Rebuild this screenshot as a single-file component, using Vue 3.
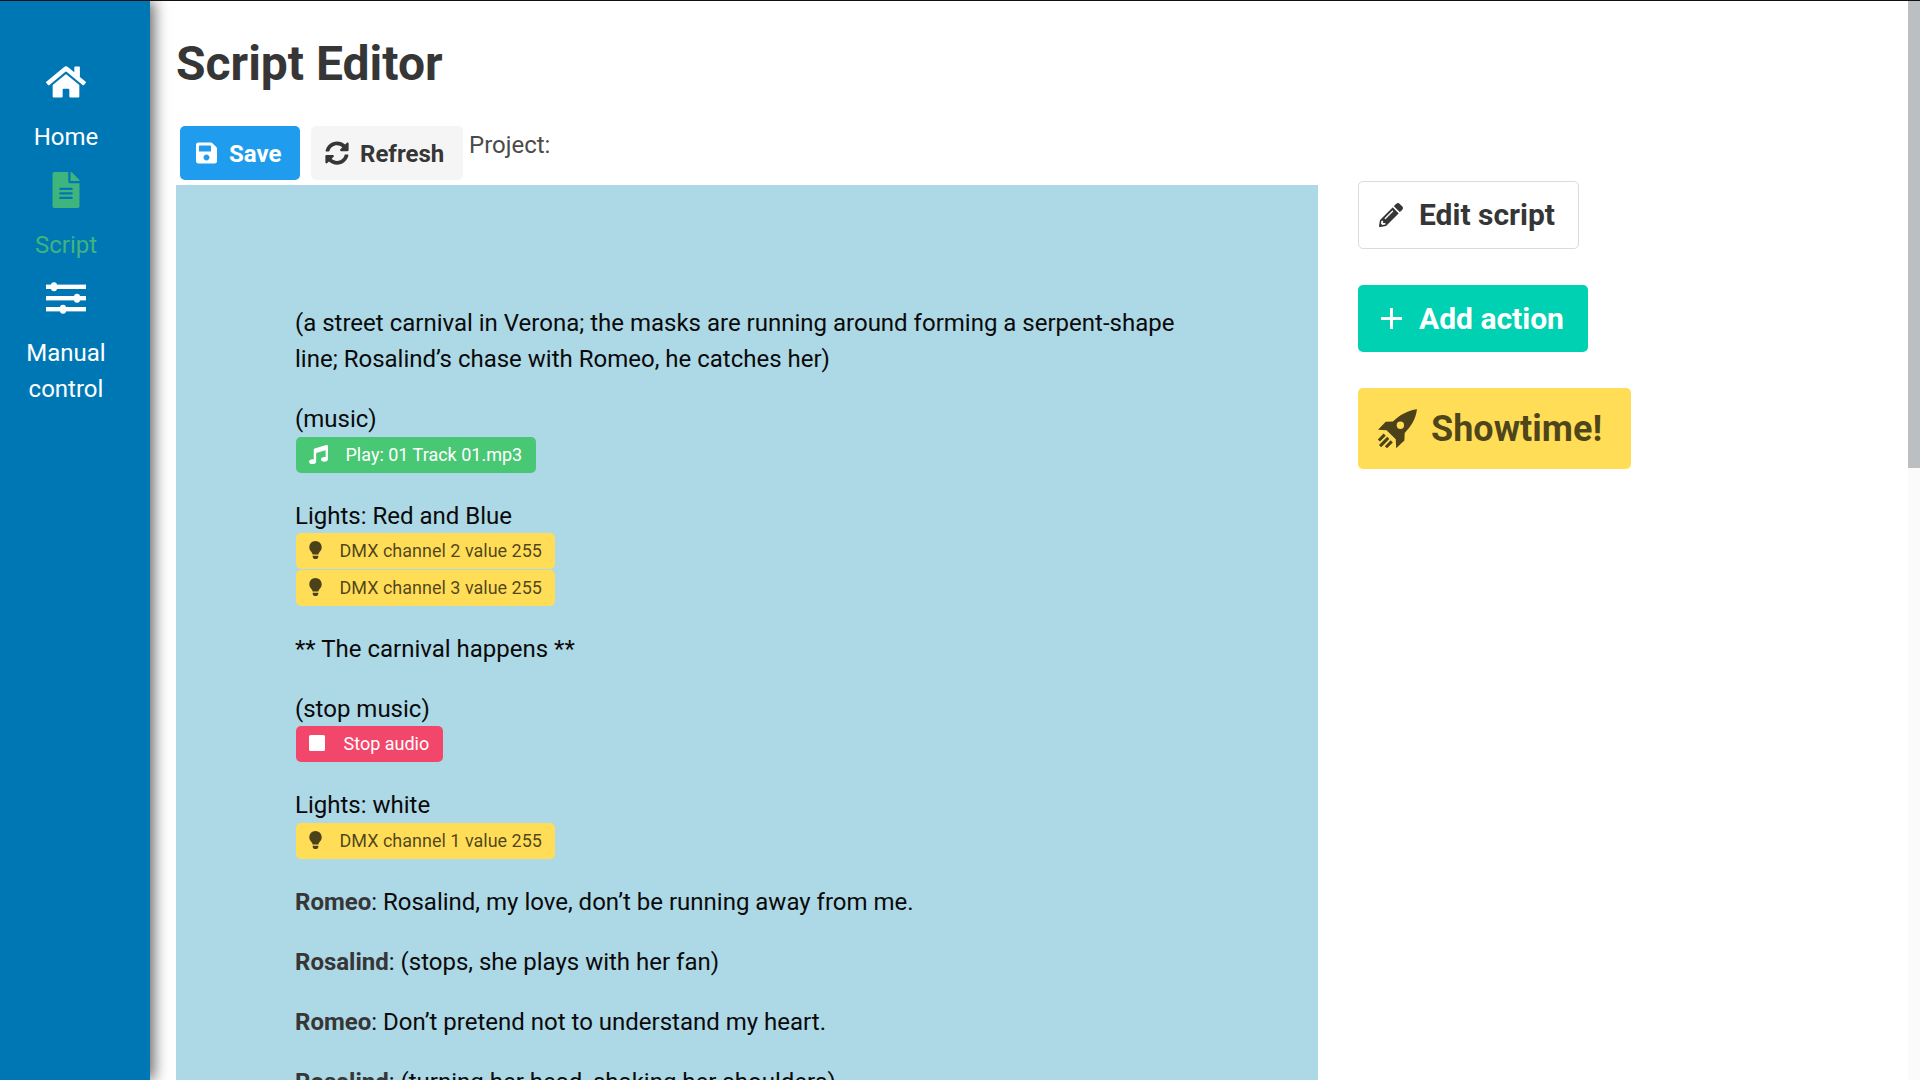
<script setup>
const paragraphs = [
  ['Romeo', ': Rosalind, my love, don’t be running away from me.'],
  ['Rosalind', ': (stops, she plays with her fan)'],
  ['Romeo', ': Don’t pretend not to understand my heart.'],
  ['Rosalind', ': (turning her head, shaking her shoulders)'],
]
const bulb = 'M96.06 454.35c.01 6.29 1.87 12.45 5.36 17.69l17.09 25.69a31.99 31.99 0 0 0 26.64 14.28h61.71a31.99 31.99 0 0 0 26.64-14.28l17.09-25.69a31.989 31.989 0 0 0 5.36-17.69l.04-38.35H96.01l.05 38.35zM0 176c0 44.37 16.45 84.85 43.56 115.78 16.52 18.85 42.36 58.23 52.21 91.45.04.26.07.52.11.78h160.24c.04-.26.07-.51.11-.78 9.85-33.22 35.69-72.6 52.21-91.45C335.55 260.85 352 220.37 352 176 352 78.61 272.91-.3 175.45 0 73.44.31 0 82.97 0 176z'
</script>

<template>
  <div class="app">
    <nav class="sidebar">
      <a class="nav-item">
        <svg class="nav-icon" viewBox="0 0 576 512"><path fill="currentColor" d="M280.37 148.26L96 300.11V464a16 16 0 0 0 16 16l112.06-.29a16 16 0 0 0 15.92-16V368a16 16 0 0 1 16-16h64a16 16 0 0 1 16 16v95.64a16 16 0 0 0 16 16.05L464 480a16 16 0 0 0 16-16V300L295.67 148.26a12.19 12.19 0 0 0-15.3 0zM571.6 251.47L488 182.56V44.05a12 12 0 0 0-12-12h-56a12 12 0 0 0-12 12v72.61L318.47 43a48 48 0 0 0-61 0L4.34 251.47a12 12 0 0 0-1.6 16.9l25.5 31A12 12 0 0 0 45.15 301l235.22-193.74a12.19 12.19 0 0 1 15.3 0L530.9 301a12 12 0 0 0 16.9-1.6l25.5-31a12 12 0 0 0-1.7-16.93z"/></svg>
        <span>Home</span>
      </a>
      <a class="nav-item active">
        <svg class="nav-icon" viewBox="0 0 384 512"><path fill="currentColor" d="M224 136V0H24C10.7 0 0 10.7 0 24v464c0 13.3 10.7 24 24 24h336c13.3 0 24-10.7 24-24V160H248c-13.2 0-24-10.8-24-24zm64 236c0 6.6-5.4 12-12 12H108c-6.6 0-12-5.4-12-12v-8c0-6.6 5.4-12 12-12h168c6.6 0 12 5.4 12 12v8zm0-64c0 6.6-5.4 12-12 12H108c-6.6 0-12-5.4-12-12v-8c0-6.6 5.4-12 12-12h168c6.6 0 12 5.4 12 12v8zm0-72v8c0 6.6-5.4 12-12 12H108c-6.6 0-12-5.4-12-12v-8c0-6.6 5.4-12 12-12h168c6.6 0 12 5.4 12 12zm96-114.1v6.1H256V0h6.1c6.4 0 12.5 2.5 17 7l97.9 98c4.5 4.5 7 10.6 7 16.9z"/></svg>
        <span>Script</span>
      </a>
      <a class="nav-item">
        <svg class="nav-icon" viewBox="0 0 40 36"><g fill="currentColor"><rect x="0" y="4.6" width="40" height="4.4"/><rect x="5" y="2.2" width="6" height="9" rx="3"/><rect x="0" y="16" width="40" height="4.4"/><rect x="28" y="13.7" width="6" height="9" rx="3"/><rect x="0" y="27" width="40" height="4.4"/><rect x="14" y="24.7" width="6" height="9" rx="3"/></g></svg>
        <span>Manual<br>control</span>
      </a>
    </nav>

    <main class="main">
      <h1 class="title">Script Editor</h1>
      <div class="columns">
        <div class="editor-col">
          <div class="toolbar">
            <button class="btn btn-save">
              <svg class="btn-icon" viewBox="0 0 448 512"><path fill="currentColor" d="M433.941 129.941l-83.882-83.882A48 48 0 0 0 316.118 32H48C21.49 32 0 53.49 0 80v352c0 26.51 21.49 48 48 48h352c26.51 0 48-21.49 48-48V163.882a48 48 0 0 0-14.059-33.941zM224 416c-35.346 0-64-28.654-64-64 0-35.346 28.654-64 64-64s64 28.654 64 64c0 35.346-28.654 64-64 64zm96-304.52V212c0 6.627-5.373 12-12 12H76c-6.627 0-12-5.373-12-12V108c0-6.627 5.373-12 12-12h228.52c3.183 0 6.235 1.264 8.485 3.515l3.48 3.48A11.996 11.996 0 0 1 320 111.48z"/></svg>
              <span>Save</span>
            </button>
            <button class="btn btn-refresh">
              <svg class="btn-icon" viewBox="0 0 512 512"><path fill="currentColor" d="M370.72 133.28C339.458 104.008 298.888 87.962 255.848 88c-77.458.068-144.328 53.178-162.791 126.85-1.344 5.363-6.122 9.15-11.651 9.15H24.103c-7.498 0-13.194-6.807-11.807-14.176C33.933 94.924 134.813 8 256 8c66.448 0 126.791 26.136 171.315 68.685L463.03 40.97C478.149 25.851 504 36.559 504 57.941V192c0 13.255-10.745 24-24 24H345.941c-21.382 0-32.09-25.851-16.971-40.971l41.75-41.749zM32 296h134.059c21.382 0 32.09 25.851 16.971 40.971l-41.75 41.75c31.262 29.273 71.835 45.319 114.876 45.28 77.418-.07 144.315-53.144 162.787-126.849 1.344-5.363 6.122-9.15 11.651-9.15h57.304c7.498 0 13.194 6.807 11.807 14.176C478.067 417.076 377.187 504 256 504c-66.448 0-126.791-26.136-171.315-68.685L48.97 471.03C33.851 486.149 8 475.441 8 454.059V320c0-13.255 10.745-24 24-24z"/></svg>
              <span class="lift">Refresh</span>
            </button>
            <span class="project">Project:</span>
          </div>
          <section class="script">
            <p>(a street carnival in Verona; the masks are running around forming a serpent-shape line; Rosalind’s chase with Romeo, he catches her)</p>
            <div class="block">
              <p>(music)</p>
              <div class="tag tag-green">
                <svg class="tag-icon music" viewBox="0 0 512 512"><path fill="currentColor" d="M511.99 32.01c0-21.71-21.1-37.01-41.6-30.51L150.4 96c-13.3 4.2-22.4 16.5-22.4 30.5v261.42c-10.05-2.38-20.72-3.92-32-3.92-53.02 0-96 28.65-96 64s42.98 64 96 64 96-28.65 96-64V214.31l256-75.02v184.63c-10.05-2.38-20.72-3.92-32-3.92-53.02 0-96 28.65-96 64s42.98 64 96 64 96-28.65 96-64l-.01-351.99z"/></svg>
                <span>Play: 01 Track 01.mp3</span>
              </div>
            </div>
            <div class="block">
              <p class="low">Lights: Red and Blue</p>
              <div class="tag tag-yellow">
                <svg class="tag-icon bulb" viewBox="0 0 352 512"><path fill="currentColor" :d="bulb"/></svg>
                <span>DMX channel 2 value 255</span>
              </div>
              <div class="tag tag-yellow">
                <svg class="tag-icon bulb" viewBox="0 0 352 512"><path fill="currentColor" :d="bulb"/></svg>
                <span>DMX channel 3 value 255</span>
              </div>
            </div>
            <p class="carnival">** The carnival happens **</p>
            <div class="block">
              <p class="low">(stop music)</p>
              <div class="tag tag-red">
                <svg class="tag-icon stop" viewBox="0 0 16 16"><rect width="16" height="16" rx="1.6" fill="currentColor"/></svg>
                <span>Stop audio</span>
              </div>
            </div>
            <div class="block last">
              <p class="gap-line">Lights: white</p>
              <div class="tag tag-yellow">
                <svg class="tag-icon bulb" viewBox="0 0 352 512"><path fill="currentColor" :d="bulb"/></svg>
                <span>DMX channel 1 value 255</span>
              </div>
            </div>
            <p v-for="(p, i) in paragraphs" :key="i"><strong>{{ p[0] }}</strong>{{ p[1] }}</p>
          </section>
        </div>
        <aside class="actions">
          <button class="btn btn-md btn-edit">
            <svg class="act-icon" viewBox="0 0 512 512"><path fill="currentColor" d="M497.9 142.1l-46.1 46.1c-4.7 4.7-12.3 4.7-17 0l-111-111c-4.7-4.7-4.7-12.3 0-17l46.1-46.1c18.7-18.7 49.1-18.7 67.9 0l60.1 60.1c18.8 18.7 18.8 49.1 0 67.9zM284.2 99.8L21.6 362.4.4 483.9c-2.9 16.4 11.4 30.6 27.8 27.8l121.5-21.3 262.6-262.6c4.7-4.7 4.7-12.3 0-17l-111-111c-4.8-4.7-12.4-4.7-17.1 0zM124.1 339.9c-5.5-5.5-5.5-14.3 0-19.8l154-154c5.5-5.5 14.3-5.5 19.8 0s5.5 14.3 0 19.8l-154 154c-5.5 5.5-14.3 5.5-19.8 0zM88 424h48v36.3l-64.5 11.3-31.1-31.1L51.7 376H88v48z"/></svg>
            <span>Edit script</span>
          </button>
          <button class="btn btn-md btn-add">
            <svg class="act-icon" viewBox="0 0 21 21"><path fill="currentColor" d="M9 0h3v9h9v3h-9v9H9v-9H0V9h9z"/></svg>
            <span>Add action</span>
          </button>
          <button class="btn btn-lg btn-show">
            <svg class="rocket" viewBox="0 0 39 39"><path fill="currentColor" d="M39 .3C30 1.5 22 6 15.5 12.2L8.5 12.5 1 20.2l8.3.4 9 9 .4 8.6 8-7.6.3-7.3C33.5 17 37.8 9.5 39 .3zM22.8 12.2a3.6 3.6 0 1 1 0 7.2 3.6 3.6 0 0 1 0-7.2z"/><path fill="none" stroke="currentColor" stroke-width="3" d="M7.5 25 1.8 30.7M11 28.2 3 36.2M14.4 31.6 8.7 37.3"/></svg>
            <span>Showtime!</span>
          </button>
        </aside>
      </div>
    </main>
    <div class="scrollbar"><div class="thumb"></div></div>
  </div>
</template>

<style>
html, body { margin: 0; height: 100%; overflow: hidden; background: #fff; }
</style>

<style scoped>
.app {
  display: flex;
  height: 1080px;
  overflow: hidden;
  font-family: Roboto, "Liberation Sans", sans-serif;
  font-size: 24px;
  line-height: 1.5;
  color: #4a4a4a;
  border-top: 1px solid #111;
  box-sizing: border-box;
  position: relative;
}
.sidebar {
  flex: 0 0 150px;
  background: #0077b5;
  box-shadow: 4px 0 14px rgba(0, 0, 0, 0.6);
  padding: 63px 18px 0 0;
  box-sizing: border-box;
  color: #fff;
  display: flex;
  flex-direction: column;
  gap: 17px;
  z-index: 1;
}
.nav-item {
  display: flex;
  flex-direction: column;
  align-items: center;
  text-align: center;
  color: #fff;
}
.nav-item.active { color: #3fb47c; }
.nav-icon { height: 36px; width: 40px; margin-bottom: 19px; display: block; }
.main {
  flex: 1;
  min-width: 0;
  padding: 0 26px;
  box-sizing: border-box;
}
.title {
  margin: 36px 0 0;
  font-size: 48px;
  line-height: 54px;
  font-weight: 700;
  color: #363636;
}
.columns {
  display: flex;
  margin-top: 35px;
}
.editor-col { width: 1142px; flex: none; }
.toolbar {
  display: flex;
  align-items: flex-start;
  padding-left: 4px;
  height: 59px;
}
.btn {
  display: inline-flex;
  align-items: center;
  border: 1px solid transparent;
  border-radius: 5px;
  font: inherit;
  font-weight: 700;
  box-sizing: border-box;
  cursor: pointer;
  padding: 0;
}
.btn-save {
  width: 120px;
  height: 54px;
  background: #209cee;
  color: #fff;
  padding: 2px 0 0 15px;
  gap: 12px;
}
.btn-save .btn-icon { margin-top: -2px; }
.btn-refresh {
  width: 152px;
  height: 54px;
  background: #f5f5f5;
  color: #363636;
  margin-left: 11px;
  padding: 2px 0 0 13px;
  gap: 11px;
}
.btn-refresh .btn-icon { margin-top: -2px; }
.btn-icon { width: 24px; height: 24px; display: block; }
.btn-save .btn-icon { width: 21px; }
.project { margin: 1px 0 0 6px; line-height: 36px; }
.script {
  background: #add8e6;
  padding: 120px;
  color: #0a0a0a;
  height: 1400px;
  box-sizing: border-box;
}
.script p { margin: 0 0 24px -1px; }
.script strong { color: #363636; font-weight: 700; }
.block { margin-bottom: 24px; }
.block.last { margin-bottom: 25px; }
.script .block p { margin: 0 0 0 -1px; }
.script .block p.low { padding-top: 1px; margin-bottom: -1px; }
.script .block p.gap-line { padding-top: 1px; }
.script p.carnival { padding-top: 1px; margin-bottom: 23px; }
.tag {
  display: flex;
  width: fit-content;
  align-items: center;
  height: 36px;
  box-sizing: border-box;
  border-radius: 5px;
  font-size: 18px;
  line-height: 1.5;
  padding: 0 13.5px 2px;
  margin-bottom: 1px;
}
.tag:last-child { margin-bottom: 0; }
.tag-green { background: #48c774; color: #fff; }
.tag-yellow { background: #ffdd57; color: rgba(0, 0, 0, 0.7); }
.tag-red { background: #f2466b; color: #fff; }
.tag-icon { display: block; flex: none; }
.music { width: 19px; height: 19px; margin: 0 17.5px 0 -0.5px; }
.bulb { width: 13px; height: 18px; margin: 0 18px 0 -1px; }
.stop { width: 16px; height: 16px; margin: 0 18.5px 0 -0.5px; }
.actions {
  margin-left: 40px;
  margin-top: 55px;
  display: flex;
  flex-direction: column;
  align-items: flex-start;
}
.btn-md { font-size: 30px; height: 67.5px; }
.btn-edit {
  width: 221px;
  background: #fff;
  border-color: #dbdbdb;
  color: #363636;
  padding-left: 20px;
  gap: 16px;
  margin-bottom: 36px;
}
.btn-add {
  width: 230px;
  background: #00d1b2;
  color: #fff;
  padding-left: 22px;
  gap: 17px;
  margin-bottom: 36px;
}
.act-icon { width: 24px; height: 24px; display: block; }
.btn-add .act-icon { width: 21px; height: 21px; }
.btn-lg {
  font-size: 36px;
  height: 81px;
  width: 273px;
  background: #ffdd57;
  color: rgba(0, 0, 0, 0.7);
  padding-left: 18px;
  gap: 14px;
}
.rocket { width: 40px; height: 40px; display: block; }
.scrollbar {
  position: absolute;
  top: 0;
  right: 0;
  width: 12px;
  height: 100%;
  background: #fbfbfb;
}
.thumb { height: 467px; background: #bcbfc1; }
</style>
